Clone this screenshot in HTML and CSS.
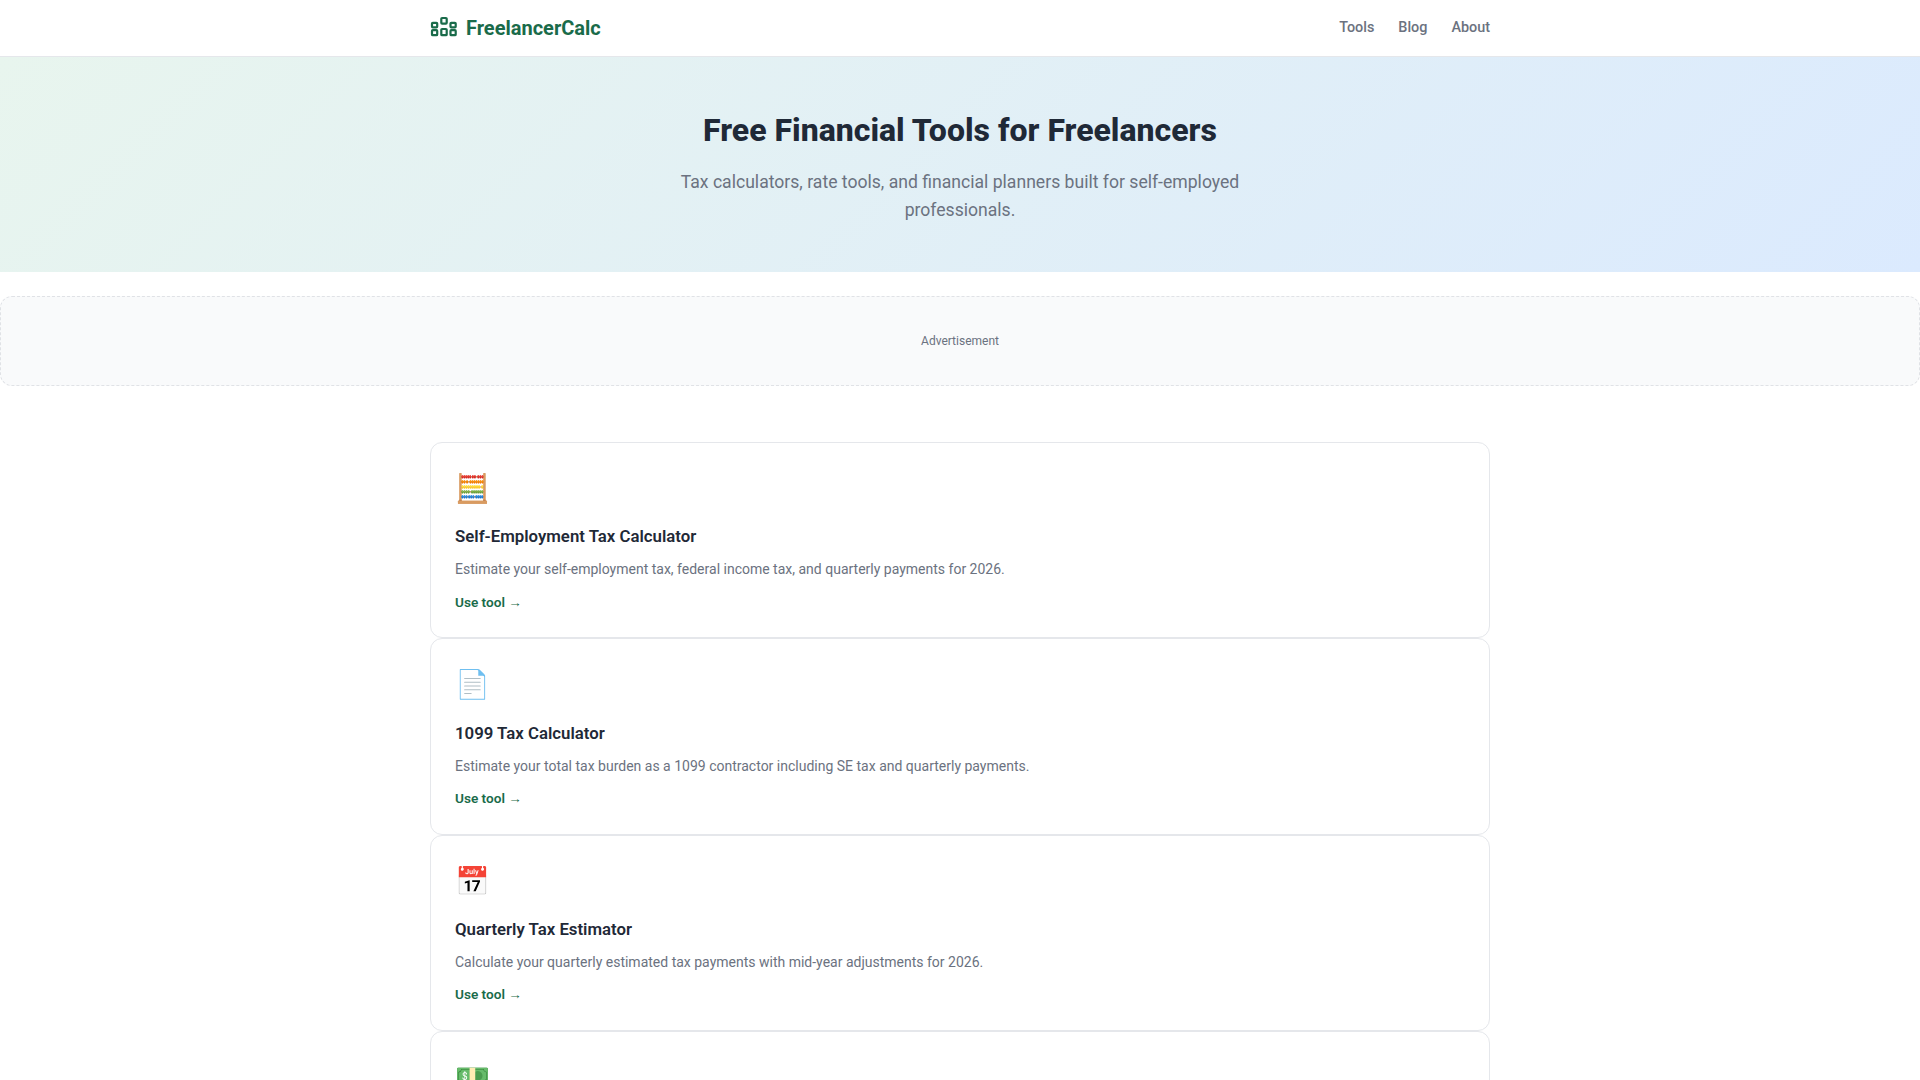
FILE: index.html
```html
<!DOCTYPE html>
<html lang="en">
<head>
    <meta charset="UTF-8">
    <meta name="viewport" content="width=device-width, initial-scale=1.0">
    <title>FreelancerCalc</title>
    <link rel="stylesheet" href="styles.css">
</head>
<body>
    <header class="site-header">
        <div class="container header-inner">
            <a class="logo" href="#">
                <svg class="logo-icon" viewBox="0 0 28 22" fill="none" stroke="currentColor" stroke-width="2.2">
                    <rect x="2" y="6.8" width="5.2" height="4.6" rx="0.8"/>
                    <rect x="2" y="14.2" width="5.2" height="5" rx="0.8"/>
                    <rect x="11.3" y="2" width="5.4" height="5.6" rx="0.8"/>
                    <rect x="11.3" y="13" width="5.4" height="6.2" rx="0.8"/>
                    <rect x="20.5" y="6.8" width="5.2" height="4.6" rx="0.8"/>
                    <rect x="20.5" y="14.2" width="5.2" height="5" rx="0.8"/>
                </svg>
                FreelancerCalc
            </a>
            <nav class="nav">
                <a href="#">Tools</a>
                <a href="#">Blog</a>
                <a href="#">About</a>
            </nav>
        </div>
    </header>

    <section class="hero">
        <h1>Free Financial Tools for Freelancers</h1>
        <p>Tax calculators, rate tools, and financial planners built for self-employed professionals.</p>
    </section>

    <div class="ad-slot">Advertisement</div>

    <main class="container tools">
        <a class="card" href="#">
            <div class="card-icon">🧮</div>
            <h3>Self-Employment Tax Calculator</h3>
            <p>Estimate your self-employment tax, federal income tax, and quarterly payments for 2026.</p>
            <span class="card-link">Use tool →</span>
        </a>
        <a class="card" href="#">
            <div class="card-icon">📄</div>
            <h3>1099 Tax Calculator</h3>
            <p>Estimate your total tax burden as a 1099 contractor including SE tax and quarterly payments.</p>
            <span class="card-link">Use tool →</span>
        </a>
        <a class="card" href="#">
            <div class="card-icon">📅</div>
            <h3>Quarterly Tax Estimator</h3>
            <p>Calculate your quarterly estimated tax payments with mid-year adjustments for 2026.</p>
            <span class="card-link">Use tool →</span>
        </a>
        <a class="card" href="#">
            <div class="card-icon">💵</div>
        </a>
    </main>
</body>
</html>
```

FILE: styles.css
```css
* {
    box-sizing: border-box;
}
body {
    font-family: Roboto, sans-serif;
    line-height: 1.6;
    margin: 0;
    padding: 0;
    background-color: #ffffff;
    color: #1f2937;
}
a {
    text-decoration: none;
    color: inherit;
}
.container {
    max-width: 1100px;
    margin: 0 auto;
    padding: 0 20px;
}
.site-header {
    height: 57px;
    background: #ffffff;
    border-bottom: 1px solid #e5e7eb;
}
.header-inner {
    height: 56px;
    display: flex;
    align-items: center;
    justify-content: space-between;
}
.logo {
    display: flex;
    align-items: center;
    gap: 8px;
    font-size: 20px;
    font-weight: 700;
    color: #1a6b4a;
}
.logo-icon {
    width: 28px;
    height: 22px;
    margin-top: -2px;
}
.nav {
    display: flex;
    gap: 24px;
}
.nav a {
    font-size: 14.4px;
    font-weight: 500;
    color: #6b7280;
}
.hero {
    height: 215px;
    padding: 54px 20px 0;
    text-align: center;
    background: linear-gradient(135deg, #e8f5ee, #dbeafe);
}
.hero h1 {
    margin: 0 0 19px;
    font-size: 32px;
    line-height: 38px;
    font-weight: 800;
    color: #1f2937;
}
.hero p {
    max-width: 600px;
    margin: 0 auto;
    font-size: 17.6px;
    line-height: 28px;
    color: #6b7280;
}
.ad-slot {
    height: 90px;
    margin: 24px 0 56px;
    padding-top: 2px;
    display: flex;
    align-items: center;
    justify-content: center;
    background: #f9fafb;
    border: 1px dashed #e0e2e6;
    border-radius: 12px;
    font-size: 12px;
    color: #6b7280;
}
.card {
    display: block;
    padding: 24px;
    border: 1px solid #e5e7eb;
    border-radius: 12px;
    background: #ffffff;
}
.card-icon {
    font-size: 28px;
    margin-bottom: 11.7px;
}
.card h3 {
    margin: 0 0 8px;
    font-size: 16.8px;
    font-weight: 600;
    color: #1f2937;
}
.card p {
    margin: 0 0 10.8px;
    font-size: 14px;
    color: #6b7280;
}
.card-link {
    display: block;
    font-size: 13.6px;
    font-weight: 600;
    color: #1a6b4a;
}
```
